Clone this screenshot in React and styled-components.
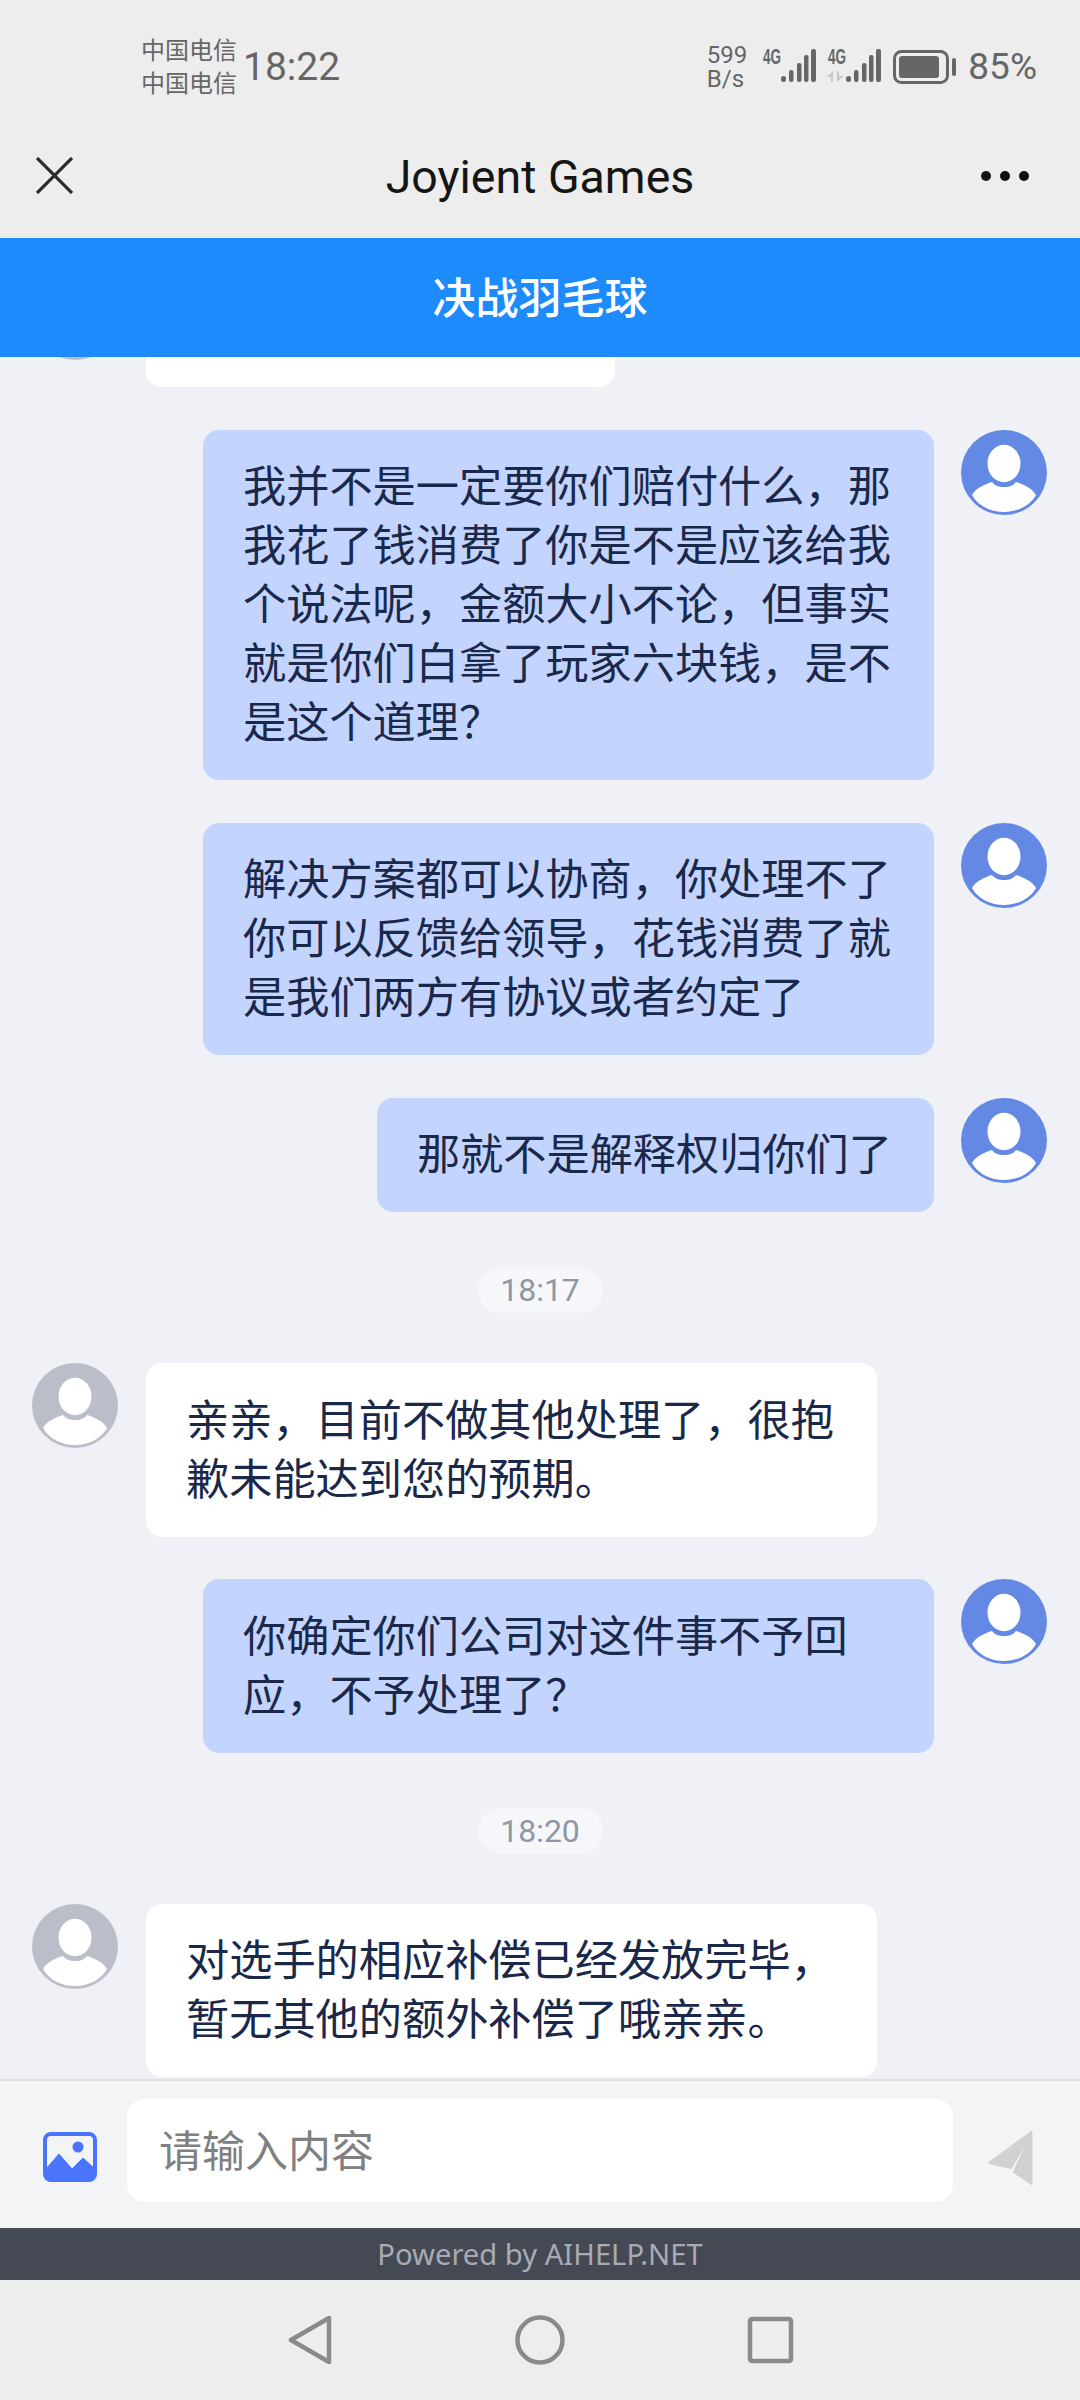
import React from "react";
import styled, { createGlobalStyle } from "styled-components";

const GlobalStyle = createGlobalStyle`
	html, body {
		margin: 0;
		padding: 0;
		background: #eff1f7;
	}
	* {
		box-sizing: border-box;
	}
`;

const sans = `Roboto, "Noto Sans CJK SC", sans-serif`;
const cjk = `"Noto Sans CJK SC", "Noto Sans", sans-serif`;

const messages = [
	{ kind: "stub" },
	{ kind: "user", text: "我并不是一定要你们赔付什么，那我花了钱消费了你是不是应该给我个说法呢，金额大小不论，但事实就是你们白拿了玩家六块钱，是不是这个道理？" },
	{ kind: "user", text: "解决方案都可以协商，你处理不了你可以反馈给领导，花钱消费了就是我们两方有协议或者约定了" },
	{ kind: "user", text: "那就不是解释权归你们了" },
	{ kind: "time", text: "18:17" },
	{ kind: "agent", text: "亲亲，目前不做其他处理了，很抱歉未能达到您的预期。" },
	{ kind: "user", text: "你确定你们公司对这件事不予回应，不予处理了？" },
	{ kind: "time", text: "18:20" },
	{ kind: "agent", text: "对选手的相应补偿已经发放完毕，暂无其他的额外补偿了哦亲亲。" },
];

const Avatar = ({ color }) => (
	<AvatarSvg viewBox="0 0 86 85">
		<ellipse cx="43" cy="42.5" rx="43" ry="42.5" fill={color} />
		<ellipse cx="43" cy="33.5" rx="16.5" ry="18.7" fill="#fff" />
		<path
			d="M11 65C15 58 24 54 31 52C34 56 38 57 43 57C48 57 52 56 55 52C62 54 71 58 75 65C69 76 56 82 43 82C30 82 17 76 11 65Z"
			fill="#fff"
		/>
	</AvatarSvg>
);

const Signal = ({ arrows }) => (
	<SignalSvg width="54" height="42" viewBox="0 -6 54 42">
		<SignalLabel x="1" y="15" textLength="18" lengthAdjust="spacingAndGlyphs">4G</SignalLabel>
		{arrows && <path d="M6 22V33H4V28H0ZM10 33V22H12V27H17Z" fill="#c8c8c8" />}
		<rect x="19" y="27" width="5" height="6" rx="2.5" fill="#666" />
		<rect x="27" y="21" width="4.5" height="12" rx="2" fill="#666" />
		<rect x="35" y="14" width="4.5" height="19" rx="2" fill="#666" />
		<rect x="42" y="6" width="4.5" height="27" rx="2" fill="#666" />
		<rect x="49" y="0" width="5" height="33" rx="2" fill="#666" />
	</SignalSvg>
);

const App = () => (
	<Page>
		<GlobalStyle />
		<StatusBar>
			<Carrier>
				<span>中国电信</span>
				<span>中国电信</span>
			</Carrier>
			<Clock>18:22</Clock>
			<StatusRight>
				<Speed>
					<span>599</span>
					<span>B/s</span>
				</Speed>
				<Signals>
					<Signal />
					<Signal arrows />
				</Signals>
				<svg width="64" height="34" viewBox="0 0 64 34">
					<rect x="1.5" y="1.5" width="53" height="31" rx="7" fill="none" stroke="#666" strokeWidth="3" />
					<rect x="6" y="6" width="40" height="22" rx="3" fill="#666" />
					<rect x="59" y="8" width="4" height="18" rx="2" fill="#666" />
				</svg>
				<Battery>85%</Battery>
			</StatusRight>
		</StatusBar>
		<TitleBar>
			<svg width="37" height="37" viewBox="0 0 37 37">
				<path d="M1 1L36 36M36 1L1 36" stroke="#2b2b2b" strokeWidth="3.2" fill="none" />
			</svg>
			<Title>Joyient Games</Title>
			<Dots>
				<i />
				<i />
				<i />
			</Dots>
		</TitleBar>
		<GameBar>决战羽毛球</GameBar>
		<Chat>
			{messages.map((m, i) => {
				if (m.kind === "time") return <TimePill key={i}>{m.text}</TimePill>;
				if (m.kind === "stub")
					return (
						<AgentRow key={i}>
							<Avatar color="#b9bec8" />
							<StubBubble />
						</AgentRow>
					);
				if (m.kind === "agent")
					return (
						<AgentRow key={i}>
							<Avatar color="#b9bec8" />
							<Bubble $bg="#ffffff">{m.text}</Bubble>
						</AgentRow>
					);
				return (
					<UserRow key={i}>
						<Bubble $bg="#c3d4ff">{m.text}</Bubble>
						<Avatar color="#6389e4" />
					</UserRow>
				);
			})}
		</Chat>
		<Composer>
			<ComposerIcon $top={51} width="54" height="50" viewBox="0 0 54 50">
				<rect x="2" y="2" width="50" height="46" rx="6" fill="none" stroke="#4a74fb" strokeWidth="4" />
				<circle cx="35" cy="15" r="5.5" fill="#4a74fb" />
				<path d="M2 38L16 22L29 37L40 26L52 37V44Q52 48 48 48H6Q2 48 2 44Z" fill="#4a74fb" stroke="#4a74fb" strokeLinejoin="round" />
			</ComposerIcon>
			<InputBox>请输入内容</InputBox>
			<ComposerIcon $top={49} width="46" height="56" viewBox="0 0 46 56">
				<path d="M44.5 2L2 33L24 38L36 17Z" fill="#cfd1d3" stroke="#cfd1d3" strokeWidth="2" strokeLinejoin="round" />
				<path d="M44.5 4V54L27 42L38 18Z" fill="#cfd1d3" stroke="#cfd1d3" strokeWidth="2" strokeLinejoin="round" />
			</ComposerIcon>
		</Composer>
		<Powered>Powered by AIHELP.NET</Powered>
		<NavBar>
			<svg width="50" height="50" viewBox="0 0 50 50">
				<path d="M44 3V47L6 25Z" fill="none" stroke="#8a8a8a" strokeWidth="4.5" strokeLinejoin="round" />
			</svg>
			<svg width="50" height="50" viewBox="0 0 50 50">
				<circle cx="25" cy="25" r="22.5" fill="none" stroke="#8a8a8a" strokeWidth="4.5" />
			</svg>
			<svg width="50" height="50" viewBox="0 0 50 50">
				<rect x="5" y="4" width="41" height="42" rx="2" fill="none" stroke="#8a8a8a" strokeWidth="4.5" />
			</svg>
		</NavBar>
	</Page>
);

export default App;

const Page = styled.div`
	width: 1080px;
	height: 2400px;
	display: flex;
	flex-direction: column;
	overflow: hidden;
	background: #eff1f7;
	font-family: ${cjk};
`;

const StatusBar = styled.div`
	height: 113px;
	flex-shrink: 0;
	display: flex;
	align-items: center;
	padding: 20px 43px 0 141px;
	background: #ededed;
	color: #666;
	font-family: ${sans};
`;

const Carrier = styled.div`
	display: flex;
	flex-direction: column;
	font-family: ${cjk};
	font-size: 24px;
	line-height: 33px;
	margin: -3px 6px 0 0;
`;

const Clock = styled.div`
	font-size: 39px;
`;

const StatusRight = styled.div`
	margin-left: auto;
	display: flex;
	align-items: center;
`;

const Speed = styled.div`
	display: flex;
	flex-direction: column;
	font-size: 24px;
	line-height: 24px;
	margin-right: 15px;
`;

const Signals = styled.div`
	display: flex;
	gap: 11px;
	margin-right: 12px;
`;

const SignalSvg = styled.svg`
	margin-top: -6px;
`;

const SignalLabel = styled.text`
	font-family: "Liberation Sans", sans-serif;
	font-size: 22px;
	font-weight: 700;
	fill: #666;
`;

const Battery = styled.div`
	font-size: 37px;
	margin-left: 11px;
`;

const TitleBar = styled.div`
	height: 125px;
	flex-shrink: 0;
	display: grid;
	grid-template-columns: 1fr auto 1fr;
	align-items: center;
	padding: 0 36px;
	background: #ededed;
`;

const Title = styled.div`
	font-family: ${sans};
	font-size: 46.5px;
	margin-top: 2px;
	color: #151515;
`;

const Dots = styled.div`
	justify-self: end;
	display: flex;
	gap: 9px;
	margin-right: 15px;

	i {
		width: 10px;
		height: 10px;
		border-radius: 50%;
		background: #111;
	}
`;

const GameBar = styled.div`
	height: 119px;
	flex-shrink: 0;
	display: flex;
	align-items: center;
	justify-content: center;
	padding-bottom: 5px;
	background: #1e8bfd;
	color: #fff;
	font-size: 43px;
	font-weight: 500;
`;

const Chat = styled.div`
	flex: 1;
	min-height: 0;
	display: flex;
	flex-direction: column;
	justify-content: flex-end;
	gap: 42.5px;
	padding-bottom: 2px;
	overflow: hidden;
`;

const AgentRow = styled.div`
	flex-shrink: 0;
	display: flex;
	align-items: flex-start;
	gap: 28px;
	padding-left: 32px;
`;

const UserRow = styled(AgentRow)`
	justify-content: flex-end;
	gap: 27px;
	padding: 0 33px 0 0;
`;

const AvatarSvg = styled.svg`
	width: 86px;
	height: 85px;
	flex-shrink: 0;
`;

const Bubble = styled.div`
	max-width: 731px;
	padding: 24.5px 42px 31px 40px;
	border-radius: 16px;
	background: ${p => p.$bg};
	color: #1a2849;
	font-size: 43.2px;
	line-height: 59px;
`;

const StubBubble = styled.div`
	width: 469px;
	height: 112px;
	border-radius: 16px;
	background: #fff;
`;

const TimePill = styled.div`
	flex-shrink: 0;
	align-self: center;
	width: 125px;
	height: 46px;
	margin: 12.5px 0 7.5px;
	display: flex;
	align-items: center;
	justify-content: center;
	border-radius: 23px;
	background: #f6f7fa;
	color: #8f96a6;
	font-family: ${sans};
	font-size: 32px;
`;

const Composer = styled.div`
	height: 149px;
	flex-shrink: 0;
	display: flex;
	align-items: flex-start;
	padding: 0 47px 0 43px;
	background: #f3f4f6;
	border-top: 2px solid #dfe1e6;
`;

const ComposerIcon = styled.svg`
	flex-shrink: 0;
	margin-top: ${p => p.$top}px;
`;

const InputBox = styled.div`
	width: 826px;
	height: 103px;
	margin: 18px 34px 0 30px;
	padding: 0 0 6px 32px;
	display: flex;
	align-items: center;
	border-radius: 18px;
	background: #fff;
	color: #808080;
	font-size: 43px;
`;

const Powered = styled.div`
	height: 52px;
	flex-shrink: 0;
	display: flex;
	align-items: center;
	justify-content: center;
	background: #454954;
	color: #a8abb2;
	font-family: "Noto Sans", sans-serif;
	font-size: 29.2px;
`;

const NavBar = styled.div`
	height: 120px;
	flex-shrink: 0;
	display: flex;
	align-items: center;
	justify-content: center;
	gap: 180px;
	background: #ededed;
`;
